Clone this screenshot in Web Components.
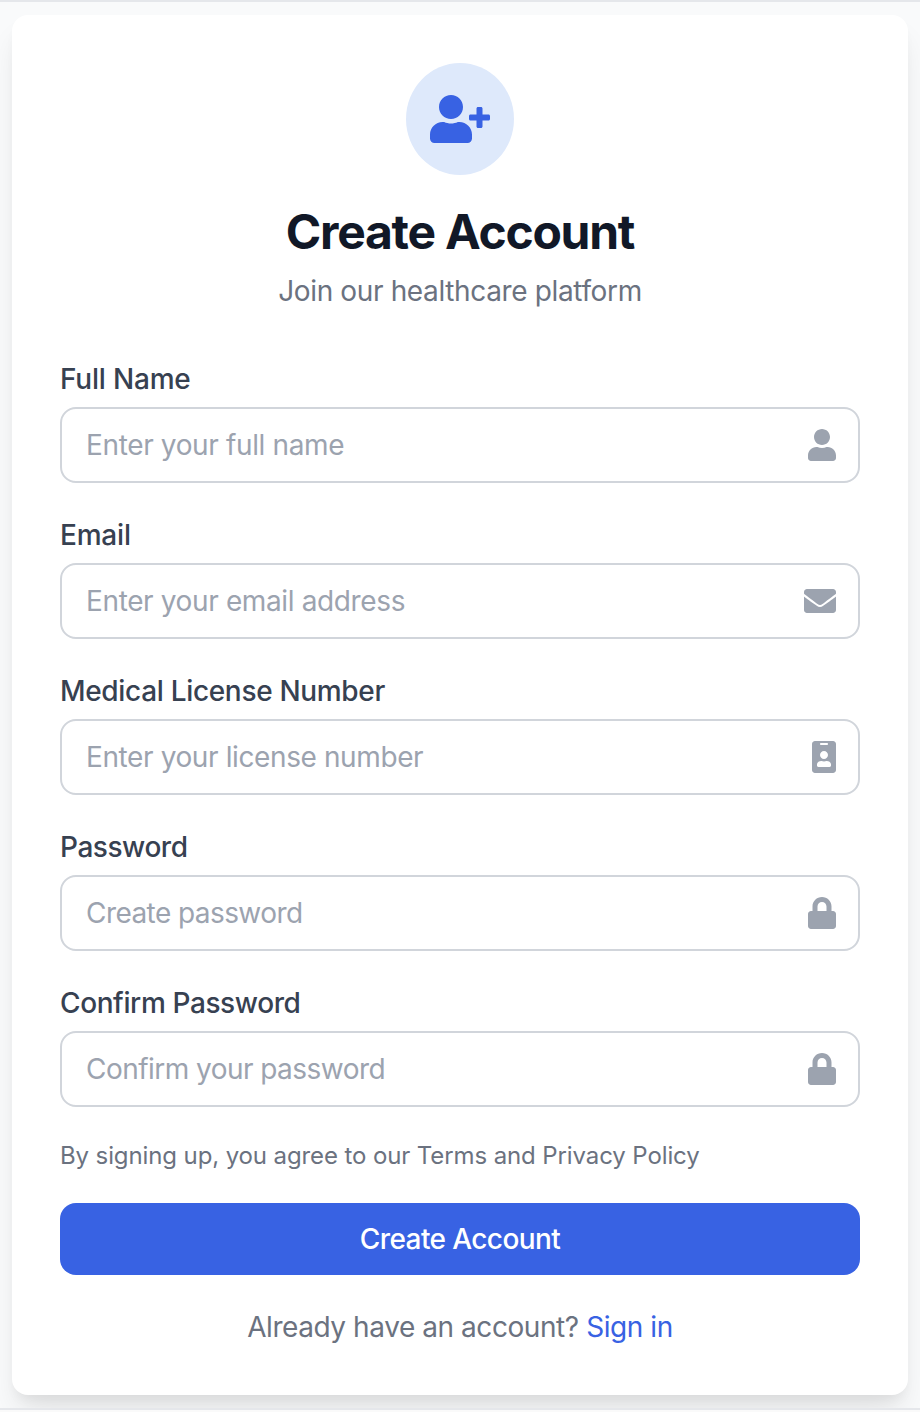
<!DOCTYPE html>
<html lang="en">
<head>
<meta charset="utf-8">
<title>Create Account</title>
<style>
html, body { margin: 0; }
body { background: #fafafa; font-family: Inter, "Liberation Sans", sans-serif; color: #6b7280; }
</style>
</head>
<body>
<signup-page></signup-page>
<script>
const ICONS = {
  'user-plus': [640, 512, 'M624 208h-64v-64c0-8.800-7.200-16-16-16h-32c-8.800 0-16 7.200-16 16v64h-64c-8.800 0-16 7.200-16 16v32c0 8.800 7.200 16 16 16h64v64c0 8.800 7.200 16 16 16h32c8.800 0 16-7.200 16-16v-64h64c8.800 0 16-7.200 16-16v-32c0-8.800-7.200-16-16-16zm-400 48c70.700 0 128-57.300 128-128S294.700 0 224 0 96 57.300 96 128s57.300 128 128 128zm89.600 32h-16.700c-22.200 10.200-46.900 16-72.900 16s-50.600-5.800-72.900-16h-16.700C60.200 288 0 348.200 0 422.400V464c0 26.500 21.500 48 48 48h352c26.500 0 48-21.500 48-48v-41.600c0-74.200-60.200-134.400-134.400-134.400z'],
  'user': [448, 512, 'M224 256c70.700 0 128-57.300 128-128S294.700 0 224 0 96 57.300 96 128s57.300 128 128 128zm89.600 32h-16.700c-22.200 10.200-46.900 16-72.900 16s-50.600-5.800-72.900-16h-16.700C60.200 288 0 348.200 0 422.400V464c0 26.500 21.500 48 48 48h352c26.500 0 48-21.500 48-48v-41.600c0-74.200-60.200-134.400-134.400-134.400z'],
  'envelope': [512, 512, 'M502.300 190.800c3.900-3.100 9.700-.2 9.700 4.700V400c0 26.500-21.500 48-48 48H48c-26.500 0-48-21.500-48-48V195.600c0-5 5.700-7.800 9.700-4.700 22.400 17.400 52.100 39.500 154.100 113.600 21.100 15.400 56.700 47.800 92.200 47.600 35.700.3 72-32.800 92.300-47.600 102-74.100 131.600-96.300 154-113.700zM256 320c23.200.4 56.600-29.200 73.400-41.400 132.700-96.300 142.800-104.700 173.400-128.700 5.800-4.500 9.200-11.500 9.200-18.900v-19c0-26.500-21.500-48-48-48H48c-26.500 0-48 21.500-48 48v19c0 7.400 3.400 14.300 9.200 18.900 30.600 23.900 40.700 32.400 173.400 128.700 16.800 12.200 50.200 41.800 73.400 41.400z'],
  'id-badge': [384, 512, 'M336 0H48C21.500 0 0 21.500 0 48v416c0 26.500 21.500 48 48 48h288c26.500 0 48-21.500 48-48V48c0-26.500-21.500-48-48-48zM144 32h96c8.800 0 16 7.200 16 16s-7.200 16-16 16h-96c-8.800 0-16-7.200-16-16s7.200-16 16-16zm48 128c35.300 0 64 28.700 64 64s-28.700 64-64 64-64-28.700-64-64 28.700-64 64-64zm112 236.800c0 10.600-10 19.200-22.400 19.200H102.400C90 416 80 407.400 80 396.800v-19.200c0-31.800 30.100-57.600 67.200-57.600h5c12.300 5.100 25.700 8 39.800 8s27.600-2.900 39.800-8h5c37.100 0 67.200 25.800 67.200 57.600v19.200z'],
  'lock': [448, 512, 'M400 224h-24v-72C376 68.200 307.800 0 224 0S72 68.200 72 152v72H48c-26.500 0-48 21.500-48 48v192c0 26.500 21.500 48 48 48h352c26.500 0 48-21.500 48-48V272c0-26.500-21.500-48-48-48zm-104 0H152v-72c0-39.700 32.300-72 72-72s72 32.300 72 72v72z']
};

class FormIcon extends HTMLElement {
  connectedCallback() {
    const [w, h, d] = ICONS[this.getAttribute('name')];
    this.attachShadow({ mode: 'open' }).innerHTML = `
      <style>:host{display:block;flex:none;height:32px}svg{display:block;height:100%;width:auto;fill:currentColor}</style>
      <svg viewBox="0 0 ${w} ${h}" style="aspect-ratio:${w}/${h}" aria-hidden="true"><path d="${d}"/></svg>`;
  }
}
customElements.define('form-icon', FormIcon);

class FormField extends HTMLElement {
  connectedCallback() {
    const a = n => this.getAttribute(n);
    this.attachShadow({ mode: 'open' }).innerHTML = `
      <style>
        :host{display:block}
        label{display:block;font-size:28px;line-height:40px;font-weight:500;color:#374151;margin-bottom:8px;letter-spacing:var(--label-ls,0)}
        .box{display:flex;align-items:center;box-sizing:border-box;height:76px;border:2px solid #d1d5db;border-radius:16px;background:#fff;padding:0 22px 0 24px;color:#9ca3af}
        input{flex:1;min-width:0;border:0;padding:0;margin:0;outline:0;background:none;font:400 28px/40px Inter,"Liberation Sans",sans-serif;letter-spacing:var(--ph-ls,0);color:#111827}
        input::placeholder{color:#9ca3af;opacity:1}
      </style>
      <label for="f"><slot></slot></label>
      <div class="box"><input id="f" type="${a('type') || 'text'}" placeholder="${a('placeholder')}"><form-icon name="${a('icon')}"></form-icon></div>`;
  }
}
customElements.define('form-field', FormField);

class SubmitButton extends HTMLElement {
  connectedCallback() {
    this.attachShadow({ mode: 'open' }).innerHTML = `
      <style>
        :host{display:block}
        button{display:block;width:100%;height:72px;border:0;border-radius:16px;padding:0;background:#3862e3;color:#fff;font:500 28px/40px Inter,"Liberation Sans",sans-serif;letter-spacing:-.6px}
      </style><button type="button"><slot></slot></button>`;
  }
}
customElements.define('submit-button', SubmitButton);

class SignupHeader extends HTMLElement {
  connectedCallback() {
    this.attachShadow({ mode: 'open' }).innerHTML = `
      <style>
        :host{display:flex;flex-direction:column;align-items:center;text-align:center}
        .badge{display:flex;align-items:center;justify-content:center;width:108px;height:112px;border-radius:50%;background:#dee9fb;color:#3862e3}
        form-icon{height:48px}
        h1{margin:27px 0 9px;font-size:48px;line-height:60px;font-weight:700;color:#111827;letter-spacing:-1.25px}
        p{margin:0;font-size:28px;line-height:40px;color:#6b7280;letter-spacing:-.36px}
      </style>
      <div class="badge"><form-icon name="user-plus"></form-icon></div>
      <h1><slot name="title"></slot></h1><p><slot></slot></p>`;
  }
}
customElements.define('signup-header', SignupHeader);

class SignupPage extends HTMLElement {
  connectedCallback() {
    this.attachShadow({ mode: 'open' }).innerHTML = `
      <style>
        :host{display:block;box-sizing:border-box;height:1410px;border-top:2px solid #e5e7eb;border-bottom:2px solid #e5e7eb;background:#f9fafb;padding:13px 12px;overflow:hidden}
        main{box-sizing:border-box;height:1380px;padding:48px;background:#fff;border-radius:16px;box-shadow:0 20px 30px -6px rgba(0,0,0,.1),0 8px 12px -4px rgba(0,0,0,.05)}
        form{display:flex;flex-direction:column;gap:32px;margin-top:48px}
        .terms{margin:0;padding-top:1px;height:31px;font-size:24px;line-height:32px;letter-spacing:-.11px}
        .signin{margin:0;font-size:28px;line-height:40px;text-align:center;letter-spacing:-.43px}
        a{color:#3862e3;text-decoration:none}
      </style>
      <main>
        <signup-header><span slot="title">Create Account</span>Join our healthcare platform</signup-header>
        <form>
          <form-field style="--label-ls:-.2px;--ph-ls:-.36px" icon="user" placeholder="Enter your full name">Full Name</form-field>
          <form-field style="--label-ls:-.2px;--ph-ls:-.37px" icon="envelope" type="email" placeholder="Enter your email address">Email</form-field>
          <form-field style="--label-ls:-.32px;--ph-ls:-.39px" icon="id-badge" placeholder="Enter your license number">Medical License Number</form-field>
          <form-field style="--label-ls:-.45px;--ph-ls:-.57px" icon="lock" type="password" placeholder="Create password">Password</form-field>
          <form-field style="--label-ls:-.39px;--ph-ls:-.54px" icon="lock" type="password" placeholder="Confirm your password">Confirm Password</form-field>
          <p class="terms">By signing up, you agree to our Terms and Privacy Policy</p>
          <submit-button>Create Account</submit-button>
          <p class="signin">Already have an account? <a href="#">Sign in</a></p>
        </form>
      </main>`;
  }
}
customElements.define('signup-page', SignupPage);
</script>
</body>
</html>
